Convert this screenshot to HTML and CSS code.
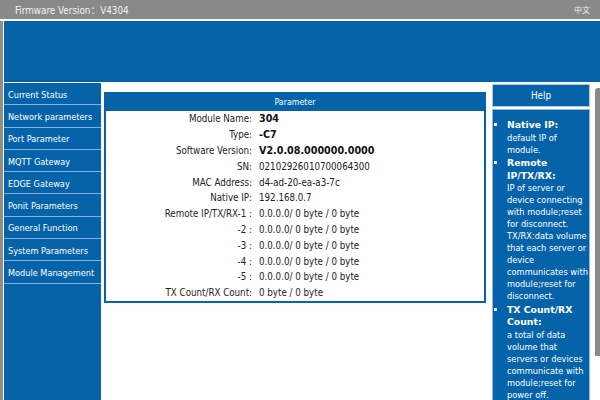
FILE: index.html
```html
<!DOCTYPE html>
<html>
<head>
<meta charset="utf-8">
<link rel="stylesheet" href="styles.css">
</head>
<body>
<div class="topbar">
  <span class="fw">Firmware Version：V4304</span>
  <span class="lang">中文</span>
</div>
<div class="page">
  <div class="banner"></div>
  <div class="main">
    <nav class="nav">
      <div class="nav-item">Current Status</div>
      <div class="nav-item">Network parameters</div>
      <div class="nav-item">Port Parameter</div>
      <div class="nav-item">MQTT Gateway</div>
      <div class="nav-item">EDGE Gateway</div>
      <div class="nav-item">Ponit Parameters</div>
      <div class="nav-item">General Function</div>
      <div class="nav-item">System Parameters</div>
      <div class="nav-item">Module Management</div>
    </nav>
    <section class="content">
      <div class="panel">
        <div class="panel-head">Parameter</div>
        <div class="panel-body">
          <div class="row"><span class="lbl">Module Name:</span><span class="val strong">304</span></div>
          <div class="row"><span class="lbl">Type:</span><span class="val strong">-C7</span></div>
          <div class="row"><span class="lbl">Software Version:</span><span class="val strong">V2.0.08.000000.0000</span></div>
          <div class="row"><span class="lbl">SN:</span><span class="val">02102926010700064300</span></div>
          <div class="row"><span class="lbl">MAC Address:</span><span class="val">d4-ad-20-ea-a3-7c</span></div>
          <div class="row"><span class="lbl">Native IP:</span><span class="val">192.168.0.7</span></div>
          <div class="row"><span class="lbl">Remote IP/TX/RX-1 :</span><span class="val">0.0.0.0/ 0 byte / 0 byte</span></div>
          <div class="row"><span class="lbl">-2 :</span><span class="val">0.0.0.0/ 0 byte / 0 byte</span></div>
          <div class="row"><span class="lbl">-3 :</span><span class="val">0.0.0.0/ 0 byte / 0 byte</span></div>
          <div class="row"><span class="lbl">-4 :</span><span class="val">0.0.0.0/ 0 byte / 0 byte</span></div>
          <div class="row"><span class="lbl">-5 :</span><span class="val">0.0.0.0/ 0 byte / 0 byte</span></div>
          <div class="row"><span class="lbl">TX Count/RX Count:</span><span class="val">0 byte / 0 byte</span></div>
        </div>
      </div>
    </section>
    <aside class="help">
      <div class="help-head">Help</div>
      <div class="help-body">
        <ul>
          <li><b>Native IP:</b><br>default IP of module.</li>
          <li><b>Remote IP/TX/RX:</b><br>IP of server or device connecting with module;reset for disconnect. TX/RX:data volume that each server or device communicates with module;reset for disconnect.</li>
          <li><b>TX Count/RX Count:</b><br>a total of data volume that servers or devices communicate with module;reset for power off.</li>
        </ul>
      </div>
    </aside>
    <div class="scroll"><div class="thumb"></div></div>
  </div>
</div>
</body>
</html>
```
FILE: styles.css
```css
html, body {
  margin: 0;
  padding: 0;
  background: #ffffff;
  font-family: "DejaVu Sans Condensed", "DejaVu Sans", "Noto Sans CJK SC", sans-serif;
  font-size: 9.7px;
  color: #222;
  height: 400px;
  overflow: hidden;
}

.topbar {
  height: 19px;
  background: #898989;
  color: #f2f2f2;
  display: flex;
  align-items: center;
  justify-content: space-between;
  padding: 0 10px 0 15px;
  font-size: 9.8px;
}

.topbar .lang {
  font-family: "Noto Sans CJK SC", sans-serif;
  font-size: 8px;
}

.page {
  margin-top: 2px;
  border-left: 3px solid #8d8d8d;
  padding-left: 1px;
  height: 379px;
  display: flex;
  flex-direction: column;
}

.banner {
  height: 61px;
  background: #0663aa;
  flex: none;
}

.main {
  margin-top: 1px;
  flex: 1;
  display: flex;
  min-height: 0;
}

.nav {
  width: 97px;
  flex: none;
  background: #0663aa;
}

.nav-item {
  box-sizing: border-box;
  height: 22.3px;
  border-bottom: 1px solid #7fb1dc;
  color: #ffffff;
  padding: 2px 0 0 4px;
  display: flex;
  align-items: center;
  font-size: 9.1px;
}

.content {
  flex: 1;
  padding: 9px 6px 0 3px;
}

.panel {
  border: 2px solid #0663aa;
  border-top: none;
}

.panel-head {
  background: #0663aa;
  color: #fff;
  height: 19px;
  display: flex;
  align-items: center;
  justify-content: center;
  font-size: 8.8px;
}

.row {
  display: grid;
  grid-template-columns: 146px 1fr;
  column-gap: 7px;
  height: 15.8px;
  align-items: center;
}

.lbl {
  text-align: right;
}

.val.strong {
  font-family: "DejaVu Sans", sans-serif;
  font-weight: bold;
  font-size: 9.6px;
  color: #111;
}

.help {
  width: 98px;
  flex: none;
  margin-right: 5px;
  display: flex;
  flex-direction: column;
}

.help-head {
  margin-top: 1px;
  height: 23px;
  box-sizing: border-box;
  background: #0663aa;
  border: 1px solid #a9c9e6;
  color: #fff;
  display: flex;
  align-items: center;
  justify-content: center;
  font-size: 9.8px;
  flex: none;
}

.help-body {
  margin-top: 2px;
  flex: 1;
  background: #0663aa;
  border: 1px solid #8fb8df;
  border-bottom: none;
  color: #fff;
  padding-top: 9px;
}

.help-body ul {
  margin: 0;
  padding-left: 14px;
  padding-right: 0;
  list-style: square;
}

.help-body li {
  line-height: 12px;
  margin-bottom: 1.5px;
  font-size: 9.2px;
}

.help-body li b {
  font-family: "DejaVu Sans", sans-serif;
  font-size: 9.3px;
  line-height: 12.5px;
}

.scroll {
  width: 5px;
  flex: none;
  display: flex;
  flex-direction: column;
}

.thumb {
  margin-top: 5px;
  height: 268px;
  background: #8a8a8a;
  border-radius: 3px 0 0 0;
}
```
